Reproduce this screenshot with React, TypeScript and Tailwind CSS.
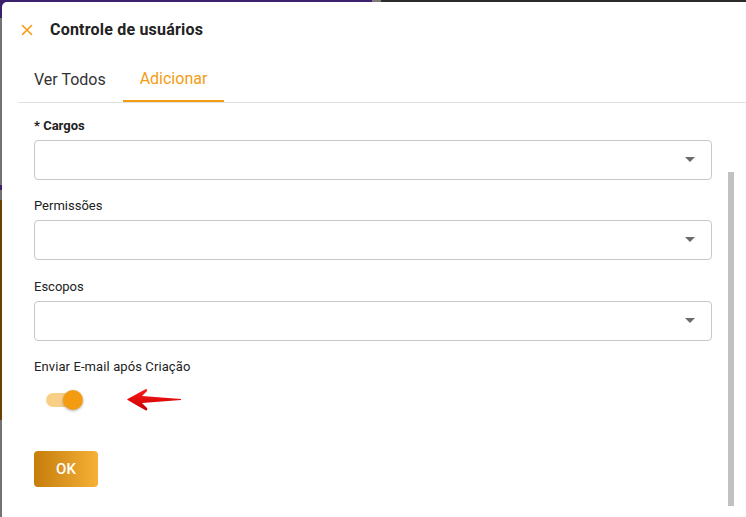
import React from "react";

const font = { fontFamily: "Roboto, 'Noto Sans', sans-serif" };

function Select() {
  return (
    <div className="h-[40px] w-full rounded-[4px] border border-[#c8c8c8] bg-white flex items-center justify-end pr-[16px]">
      <svg width="10" height="6" viewBox="0 0 10 6">
        <path d="M0 0 L10 0 L5 5 Z" fill="#6b6b6b" />
      </svg>
    </div>
  );
}

function Field({ label, bold }: { label: string; bold?: boolean }) {
  return (
    <div className="flex flex-col">
      <div
        className={`h-[16px] leading-[18px] text-[13px] text-[#222] ${bold ? "font-bold" : ""}`}
      >
        {label}
      </div>
      <div className="mt-[7px]">
        <Select />
      </div>
    </div>
  );
}

export default function App() {
  return (
    <div className="w-[746px] h-[517px] overflow-hidden flex flex-col bg-[#737373]" style={font}>
      <div className="h-[2px] flex shrink-0">
        <div className="w-[372px] bg-[#3d206b]" />
        <div className="w-[9px] bg-[#7a7a7a]" />
        <div className="flex-1 bg-[#2b2b2b]" />
      </div>
      <div className="flex flex-1 min-h-0">
        <div className="w-[2px] flex flex-col shrink-0">
          <div className="h-[16px] bg-[#3d206b]" />
          <div className="h-[167px] bg-[#737373]" />
          <div className="h-[5px] bg-[#3d206b]" />
          <div className="h-[10px] bg-[#737373]" />
          <div className="h-[220px] bg-[#6b3f02]" />
          <div className="flex-1 bg-[#737373]" />
        </div>
        <div className="flex-1 bg-[#3d206b]">
          <div className="h-full bg-white rounded-tl-[5px] flex flex-col">
            <div className="h-[56px] flex items-center pl-[18px] shrink-0">
              <svg width="12" height="12" viewBox="0 0 12 12" className="ml-[1px]">
                <path d="M1.5 1.5 L10.5 10.5 M10.5 1.5 L1.5 10.5" stroke="#f39c12" strokeWidth="1.6" strokeLinecap="round" />
              </svg>
              <div className="ml-[17px] text-[16px] font-bold text-[#222] tracking-[0.2px]">Controle de usuários</div>
            </div>
            <div className="ml-[16px] flex border-b border-[#e2e2e2] h-[45px] shrink-0">
              <div className="w-[105px] h-[44px] flex items-center pl-[16px] text-[16px] text-[#333]">
                Ver Todos
              </div>
              <div className="w-[101px] h-[44px] flex items-center justify-center text-[16px] text-[#f39c12] border-b-2 border-[#f39c12]">
                Adicionar
              </div>
            </div>
            <div className="flex flex-1 min-h-0">
              <div className="flex-1 pl-[32px] pr-[16px] pt-[14px] flex flex-col">
                <div className="flex flex-col gap-[17px]">
                  <Field label="* Cargos" bold />
                  <Field label="Permissões" />
                  <div className="flex flex-col">
                    <div className="h-[17px] leading-[19px] text-[13px] text-[#222]">Escopos</div>
                    <div className="mt-[7px]"><Select /></div>
                  </div>
                </div>
                <div className="mt-[17px] h-[16px] leading-[18px] text-[13px] text-[#222] tracking-[0.1px]">
                  Enviar E-mail após Criação
                </div>
                <div className="mt-[16px] flex items-center h-[20px]">
                  <div className="ml-[12px] relative w-[36px] h-[14px] rounded-full bg-[#f9cf87]">
                    <div className="absolute left-[17px] top-[-3px] w-[20px] h-[20px] rounded-full bg-[#f39c12] shadow-[0_1px_3px_rgba(0,0,0,0.3)]" />
                  </div>
                  <svg width="56" height="24" viewBox="0 0 56 24" className="ml-[44px]">
                    <defs>
                      <linearGradient id="ar" x1="0" y1="0" x2="0" y2="1">
                        <stop offset="0" stopColor="#ff1a1a" />
                        <stop offset="1" stopColor="#c40000" />
                      </linearGradient>
                    </defs>
                    <path d="M1 11.5 Q3 10 20 1 Q22 1.5 21 3 L16 8 L55 11 L55 12 L16 15 L21 20 Q22 22 20 22.5 Q3 13 1 11.5 Z" fill="url(#ar)" />
                  </svg>
                </div>
                <div className="mt-[41px]">
                  <div className="w-[64px] h-[36px] rounded-[4px] bg-gradient-to-r from-[#c67d08] to-[#f6b135] flex items-center justify-center text-white font-medium text-[15px]">
                    OK
                  </div>
                </div>
              </div>
              <div className="w-[18px] shrink-0 flex justify-start">
                <div className="w-[6px] mt-[69px] h-[334px] bg-[#c1c1c1]" />
              </div>
            </div>
          </div>
        </div>
      </div>
    </div>
  );
}
